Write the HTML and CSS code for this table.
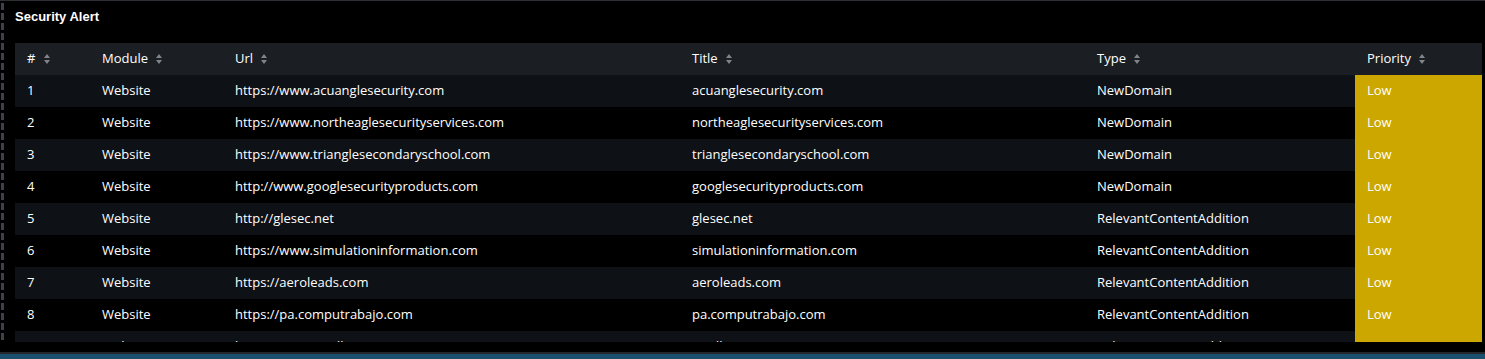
FILE: index.html
```html
<!DOCTYPE html>
<html lang="en">
<head>
    <meta charset="UTF-8">
    <meta name="viewport" content="width=device-width, initial-scale=1.0">
    <title>Security Alert</title>
    <link rel="stylesheet" href="styles.css">
</head>
<body>

    <div class="screen">
        <!-- dashed rail on the left edge -->
        <div class="rail"></div>

        <div class="panel">
            <div class="panel-title">Security Alert</div>

            <div class="table-wrap">
                <table class="alerts">
                    <thead>
                        <tr>
                            <th class="col-num"># <span class="sort"></span></th>
                            <th class="col-module">Module <span class="sort"></span></th>
                            <th class="col-url">Url <span class="sort"></span></th>
                            <th class="col-title">Title <span class="sort"></span></th>
                            <th class="col-type">Type <span class="sort"></span></th>
                            <th class="col-priority">Priority <span class="sort"></span></th>
                        </tr>
                    </thead>
                    <tbody>
                        <tr><td>1</td><td>Website</td><td>https://www.acuanglesecurity.com</td><td>acuanglesecurity.com</td><td>NewDomain</td><td class="low">Low</td></tr>
                        <tr><td>2</td><td>Website</td><td>https://www.northeaglesecurityservices.com</td><td>northeaglesecurityservices.com</td><td>NewDomain</td><td class="low">Low</td></tr>
                        <tr><td>3</td><td>Website</td><td>https://www.trianglesecondaryschool.com</td><td>trianglesecondaryschool.com</td><td>NewDomain</td><td class="low">Low</td></tr>
                        <tr><td>4</td><td>Website</td><td>http://www.googlesecurityproducts.com</td><td>googlesecurityproducts.com</td><td>NewDomain</td><td class="low">Low</td></tr>
                        <tr><td>5</td><td>Website</td><td>http://glesec.net</td><td>glesec.net</td><td>RelevantContentAddition</td><td class="low">Low</td></tr>
                        <tr><td>6</td><td>Website</td><td>https://www.simulationinformation.com</td><td>simulationinformation.com</td><td>RelevantContentAddition</td><td class="low">Low</td></tr>
                        <tr><td>7</td><td>Website</td><td>https://aeroleads.com</td><td>aeroleads.com</td><td>RelevantContentAddition</td><td class="low">Low</td></tr>
                        <tr><td>8</td><td>Website</td><td>https://pa.computrabajo.com</td><td>pa.computrabajo.com</td><td>RelevantContentAddition</td><td class="low">Low</td></tr>
                        <tr><td>9</td><td>Website</td><td>https://www.medlatec.vn</td><td>medlatec.vn</td><td>RelevantContentAddition</td><td class="low">Low</td></tr>
                    </tbody>
                </table>
            </div>
        </div>
    </div>

    <div class="footer-bar"></div>

</body>
</html>
```

FILE: styles.css
```css
body {
    margin: 0;
    height: 359px;
    overflow: hidden;
    background: #000;
    color: #fff;
    font-family: "Open Sans", "Liberation Sans", Arial, sans-serif;
    font-size: 13px;
    display: flex;
    flex-direction: column;
}

.screen {
    flex: 1;
    display: flex;
    border-top: 1px solid #2b2e33;
    min-height: 0;
}

.rail {
    width: 5px;
    flex-shrink: 0;
    background-image: repeating-linear-gradient(to bottom, #3e4248 0, #3e4248 7px, transparent 7px, transparent 10px);
    background-size: 3px 100%;
    background-position: 1px 2px;
    background-repeat: no-repeat;
}

.panel {
    flex: 1;
    background: #000;
    padding: 0 3px 0 10px;
    border-right: 1px solid #16191d;
}

.panel-title {
    font-family: "Liberation Sans", Arial, sans-serif;
    font-weight: bold;
    font-size: 13px;
    height: 42px;
    line-height: 31px;
}

.table-wrap {
    height: 299px;
    overflow: hidden;
}

.alerts {
    width: 100%;
    border-collapse: collapse;
    table-layout: fixed;
}

.alerts th,
.alerts td {
    height: 32px;
    padding: 0 12px 2px;
    text-align: left;
    white-space: nowrap;
    overflow: hidden;
    box-sizing: border-box;
}

.alerts th {
    background: #1b1e22;
    font-weight: normal;
}

.alerts tbody tr:nth-child(odd) td {
    background: #0e1115;
}

.alerts tbody tr:nth-child(even) td {
    background: #000;
}

.alerts tbody tr td.low {
    background: #cca700;
}

.col-num { width: 75px; }
.col-module { width: 133px; }
.col-url { width: 457px; }
.col-title { width: 405px; }
.col-type { width: 270px; }
.col-priority { width: 127px; }

/* little up/down sort arrows */
.sort {
    display: inline-block;
    position: relative;
    width: 7px;
    height: 10px;
    margin-left: 5px;
    vertical-align: -1px;
}

.sort::before,
.sort::after {
    content: '';
    position: absolute;
    left: 0;
    border-left: 3.5px solid transparent;
    border-right: 3.5px solid transparent;
}

.sort::before {
    top: 0;
    border-bottom: 4px solid #80858b;
}

.sort::after {
    bottom: 0;
    border-top: 4px solid #80858b;
}

.footer-bar {
    height: 5px;
    flex-shrink: 0;
    border-top: 2px solid #24272b;
    background: #1a4f6e;
    margin-top: 10px;
}
```
